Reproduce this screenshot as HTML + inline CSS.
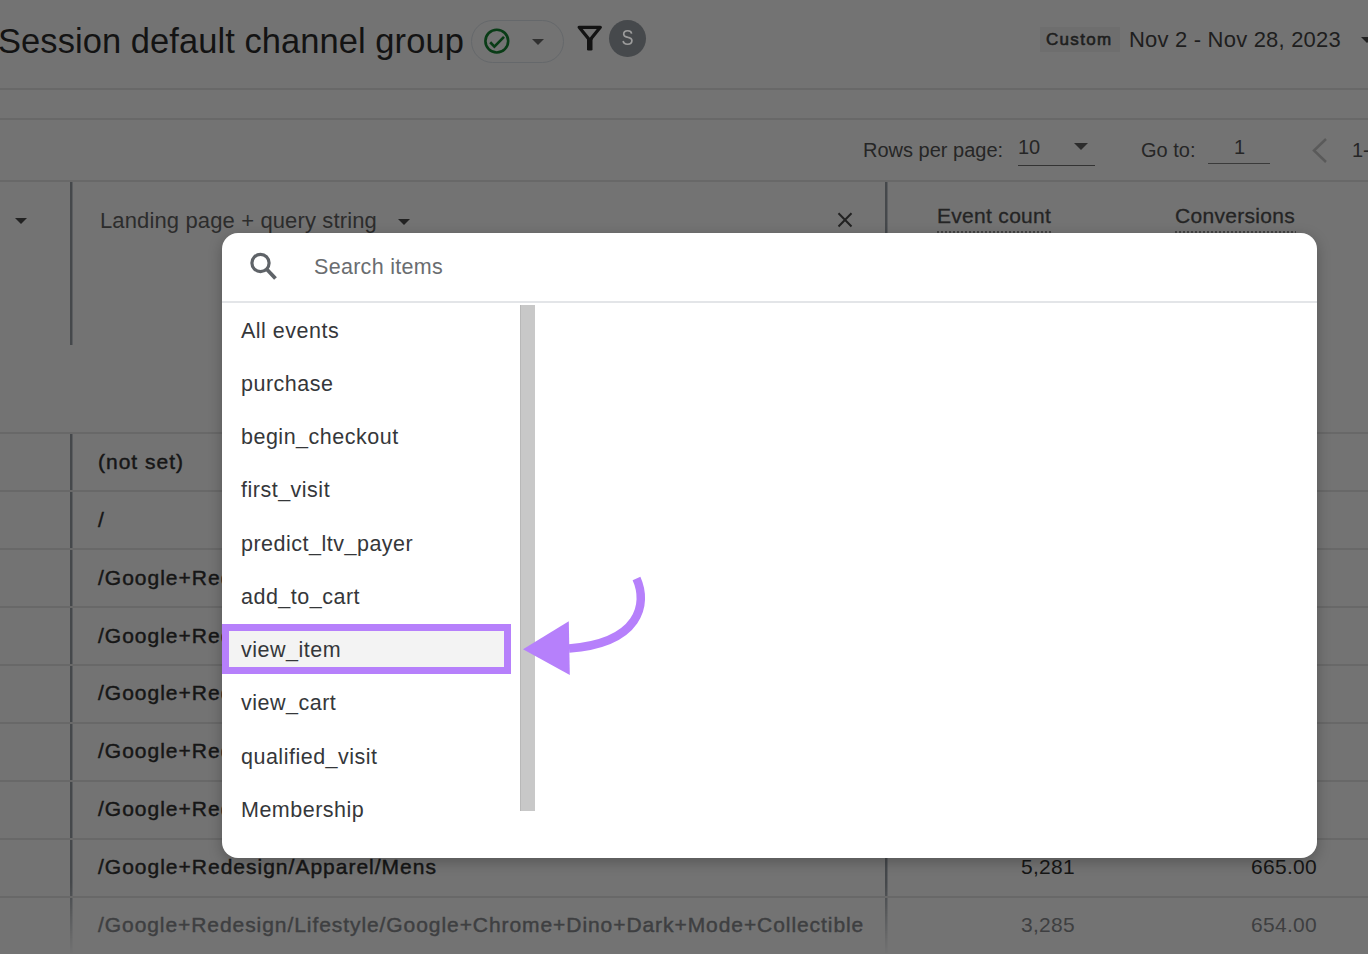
<!DOCTYPE html>
<html><head><meta charset="utf-8">
<style>
*{margin:0;padding:0;box-sizing:border-box}
html,body{width:1368px;height:954px;overflow:hidden;background:#737373;font-family:"Liberation Sans",sans-serif;position:relative}
.a{position:absolute;white-space:nowrap}
.hl{position:absolute;left:0;width:1368px;height:2px;background:#686868}
.vl{position:absolute;width:3px;background:linear-gradient(90deg,#45484b 0,#45484b 2px,#5c5e61 2px)}
.row{position:absolute;left:98px;font-size:21px;letter-spacing:1px;color:#161616;-webkit-text-stroke:0.45px #161616}
.num{position:absolute;font-size:21px;letter-spacing:0.3px;color:#161616;text-align:right}
#modal{position:absolute;left:222px;top:233px;width:1095px;height:625px;background:#fff;border-radius:16px;box-shadow:0 4px 14px rgba(0,0,0,.25)}
.it{position:absolute;left:19px;font-size:21.5px;letter-spacing:0.5px;color:#35373a}
</style></head><body>

<!-- header -->
<div class="a" id="title" style="left:-2px;top:22px;font-size:34.5px;letter-spacing:0.06px;color:#131313">Session default channel group</div>
<div class="a" id="chip" style="left:471px;top:19.5px;width:93px;height:43.5px;border:1.5px solid #65686b;border-radius:22px"></div>
<svg class="a" style="left:482px;top:27px" width="30" height="30" viewBox="0 0 30 30"><circle cx="14.8" cy="14.1" r="11.4" fill="none" stroke="#093c16" stroke-width="2.6"/><path d="M8.2 15.3L12.4 19.6 22 9.9" fill="none" stroke="#093c16" stroke-width="2.7"/></svg>
<div class="a" style="left:532px;top:39px;width:0;height:0;border-left:6.2px solid transparent;border-right:6.2px solid transparent;border-top:6px solid #303030"></div>
<svg class="a" style="left:576px;top:24px" width="28" height="28" viewBox="0 0 28 28"><path d="M3.2 3.3H24.3L13.75 16.2Z" fill="none" stroke="#131313" stroke-width="3.3" stroke-linejoin="round"/><rect x="11" y="14" width="5.5" height="12.6" rx="1.3" fill="#131313"/></svg>
<div class="a" style="left:608.5px;top:19.5px;width:37px;height:37.5px;border-radius:50%;background:#46494c"></div><div class="a" style="left:608.5px;top:19px;width:37px;color:#9c9c9c;font-size:22px;text-align:center;line-height:37px;transform:scaleX(0.82)">S</div>

<div class="a" style="left:1040px;top:27px;width:80px;height:25px;background:#6e6e6e"></div>
<div class="a" id="custom" style="left:1046px;top:30px;font-size:17px;color:#1e1e1e;letter-spacing:1.3px;-webkit-text-stroke:0.6px #1e1e1e">Custom</div>
<div class="a" id="date" style="left:1129px;top:27px;font-size:22px;letter-spacing:0.2px;color:#1e1e1e">Nov 2 - Nov 28, 2023</div>
<div class="a" style="left:1361px;top:37px;width:0;height:0;border-left:6px solid transparent;border-right:6px solid transparent;border-top:6px solid #222"></div>

<div class="hl" style="top:88px"></div>
<div class="hl" style="top:118px"></div>

<!-- pagination -->
<div class="a" id="rpp" style="left:863px;top:139px;font-size:20px;color:#262626">Rows per page:</div>
<div class="a" style="left:1018px;top:136px;font-size:20px;color:#262626">10</div>
<div class="a" style="left:1074px;top:143px;width:0;height:0;border-left:7.5px solid transparent;border-right:7.5px solid transparent;border-top:7px solid #2c2c2c"></div>
<div class="a" style="left:1018px;top:165px;width:77px;height:1px;background:#333"></div>
<div class="a" style="left:1141px;top:139px;font-size:20px;color:#262626">Go to:</div>
<div class="a" style="left:1234px;top:136px;font-size:20px;color:#262626">1</div>
<div class="a" style="left:1208px;top:163px;width:62px;height:1px;background:#3a3a3a"></div>
<svg class="a" style="left:1310px;top:137px" width="20" height="28" viewBox="0 0 20 28"><path d="M16 2L4 13.5 16 25" fill="none" stroke="#5a5a5a" stroke-width="2.5"/></svg>
<div class="a" style="left:1352px;top:139px;font-size:20px;color:#262626">1-</div>

<div class="hl" style="top:180px"></div>

<!-- table header -->
<div class="vl" style="left:70px;top:182px;height:163px"></div>
<div class="a" style="left:15px;top:218px;width:0;height:0;border-left:6px solid transparent;border-right:6px solid transparent;border-top:6px solid #222"></div>
<div class="a" id="lp" style="left:100px;top:208px;font-size:22px;letter-spacing:0.13px;color:#2c2c2c">Landing page + query string</div>
<div class="a" style="left:398px;top:219px;width:0;height:0;border-left:6px solid transparent;border-right:6px solid transparent;border-top:6px solid #222"></div>
<svg class="a" style="left:836px;top:211px" width="18" height="18" viewBox="0 0 18 18"><path d="M2.5 2.3L15.5 15.5M15.5 2.3L2.5 15.5" stroke="#222" stroke-width="2"/></svg>
<div class="vl" style="left:885px;top:182px;height:772px;-webkit-mask:linear-gradient(#000 0,#000 700px,transparent 772px)"></div>
<div class="a" id="ec" style="left:937px;top:204px;font-size:21px;letter-spacing:0.3px;color:#242424;-webkit-text-stroke:0.3px #242424">Event count</div>
<div class="a" style="left:937px;top:230.5px;width:114px;height:2px;background:repeating-linear-gradient(90deg,#444 0 2.5px,transparent 2.5px 4px)"></div>
<div class="a" id="cv" style="left:1175px;top:204px;font-size:21px;letter-spacing:0.3px;color:#242424;-webkit-text-stroke:0.3px #242424">Conversions</div>
<div class="a" style="left:1175px;top:230.5px;width:121px;height:2px;background:repeating-linear-gradient(90deg,#444 0 2.5px,transparent 2.5px 4px)"></div>

<!-- table rows -->
<div class="hl" style="top:432px"></div>
<div class="vl" style="left:70px;top:434px;height:520px;-webkit-mask:linear-gradient(#000 0,#000 448px,transparent 520px)"></div>
<div class="row" style="top:450px">(not set)</div>
<div class="hl" style="top:490px"></div>
<div class="row" style="top:508px">/</div>
<div class="hl" style="top:548px"></div>
<div class="row" style="top:566px">/Google+Redesign/Apparel</div>
<div class="hl" style="top:606px"></div>
<div class="row" style="top:624px">/Google+Redesign/Apparel</div>
<div class="hl" style="top:664px"></div>
<div class="row" style="top:681px">/Google+Redesign/Apparel</div>
<div class="hl" style="top:722px"></div>
<div class="row" style="top:739px">/Google+Redesign/Apparel</div>
<div class="hl" style="top:780px"></div>
<div class="row" style="top:797px">/Google+Redesign/Apparel</div>
<div class="hl" style="top:838px"></div>
<div class="row" id="mens" style="top:855px">/Google+Redesign/Apparel/Mens</div>
<div class="a num" style="left:0;width:1075px;top:855px">5,281</div>
<div class="a num" style="left:0;width:1317px;top:855px">665.00</div>
<div class="hl" style="top:896px"></div>
<div class="row" id="dino" style="top:913px;color:#3e3f41;letter-spacing:0.93px;-webkit-text-stroke:0.45px #3e3f41">/Google+Redesign/Lifestyle/Google+Chrome+Dino+Dark+Mode+Collectible</div>
<div class="a num" style="left:0;width:1075px;top:913px;color:#3e3f41">3,285</div>
<div class="a num" style="left:0;width:1317px;top:913px;color:#3e3f41">654.00</div>


<!-- modal -->
<div id="modal">
  <svg class="a" style="left:26px;top:18px" width="32" height="32" viewBox="0 0 32 32"><circle cx="12.5" cy="12" r="8.6" fill="none" stroke="#5f6368" stroke-width="3.2"/><path d="M18.5 18L27.5 27.5" stroke="#5f6368" stroke-width="3.8"/></svg>
  <div class="a" id="search" style="left:92px;top:22px;font-size:21.5px;letter-spacing:0.3px;color:#6a6d70">Search items</div>
  <div class="a" style="left:0;top:68px;width:1095px;height:2px;background:#e3e5e8"></div>
  <div class="a" style="left:298px;top:72px;width:15px;height:506px;background:#c8c8c8;border-left:1px solid #b8b8b8"></div>
  <div class="it" id="i0" style="top:86px">All events</div>
  <div class="it" style="top:139px">purchase</div>
  <div class="it" style="top:192px">begin_checkout</div>
  <div class="it" style="top:245px">first_visit</div>
  <div class="it" style="top:299px">predict_ltv_payer</div>
  <div class="it" style="top:352px">add_to_cart</div>
  <div class="a" style="left:0;top:391px;width:289px;height:50px;background:#f3f3f3;border:7px solid #b680fb"></div>
  <div class="it" style="top:405px">view_item</div>
  <div class="it" style="top:458px">view_cart</div>
  <div class="it" style="top:512px">qualified_visit</div>
  <div class="it" style="top:565px">Membership</div>
</div>

<!-- arrow -->
<svg class="a" style="left:0;top:0" width="1368" height="954" viewBox="0 0 1368 954">
  <path d="M636.5 578.5 C648 604, 640 643, 569 648.5" fill="none" stroke="#b680fb" stroke-width="8.5"/>
  <path d="M523 649.2 L568.8 621.3 L569.8 675.1 Z" fill="#b680fb"/>
</svg>
</body></html>
